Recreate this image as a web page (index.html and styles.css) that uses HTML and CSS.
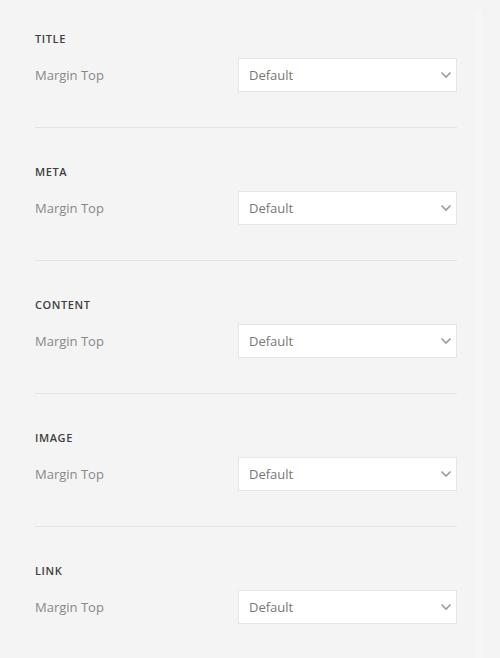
FILE: index.html
```html
<!DOCTYPE html>
<html>
<head>
<meta charset="utf-8">
<link rel="stylesheet" href="styles.css">
</head>
<body>
<div class="panel">
  <div class="section">
    <div class="title">TITLE</div>
    <div class="row">
      <span class="label">Margin Top</span>
      <div class="select"><span>Default</span><svg class="chev" width="12" height="8" viewBox="0 0 12 8"><path d="M1.5 1.5 L6 6 L10.5 1.5" fill="none" stroke="#9a9a9a" stroke-width="1.6"/></svg></div>
    </div>
  </div>
  <div class="section">
    <div class="title">META</div>
    <div class="row">
      <span class="label">Margin Top</span>
      <div class="select"><span>Default</span><svg class="chev" width="12" height="8" viewBox="0 0 12 8"><path d="M1.5 1.5 L6 6 L10.5 1.5" fill="none" stroke="#9a9a9a" stroke-width="1.6"/></svg></div>
    </div>
  </div>
  <div class="section">
    <div class="title">CONTENT</div>
    <div class="row">
      <span class="label">Margin Top</span>
      <div class="select"><span>Default</span><svg class="chev" width="12" height="8" viewBox="0 0 12 8"><path d="M1.5 1.5 L6 6 L10.5 1.5" fill="none" stroke="#9a9a9a" stroke-width="1.6"/></svg></div>
    </div>
  </div>
  <div class="section">
    <div class="title">IMAGE</div>
    <div class="row">
      <span class="label">Margin Top</span>
      <div class="select"><span>Default</span><svg class="chev" width="12" height="8" viewBox="0 0 12 8"><path d="M1.5 1.5 L6 6 L10.5 1.5" fill="none" stroke="#9a9a9a" stroke-width="1.6"/></svg></div>
    </div>
  </div>
  <div class="section last">
    <div class="title">LINK</div>
    <div class="row">
      <span class="label">Margin Top</span>
      <div class="select"><span>Default</span><svg class="chev" width="12" height="8" viewBox="0 0 12 8"><path d="M1.5 1.5 L6 6 L10.5 1.5" fill="none" stroke="#9a9a9a" stroke-width="1.6"/></svg></div>
    </div>
  </div>
</div>
<div class="scrolltrack"></div>
</body>
</html>
```
FILE: styles.css
```css
html, body {
  margin: 0;
  padding: 0;
  background: #f4f4f4;
  font-family: "Open Sans", "Noto Sans", sans-serif;
}
.panel {
  padding: 0 43px 0 35px;
}
.section {
  padding: 36px 0 35px;
  border-bottom: 1px solid #e4e4e4;
}
.section:first-child {
  padding-top: 31px;
}
.section.last {
  border-bottom: none;
}
.title {
  font-size: 11px;
  line-height: 16px;
  font-weight: 600;
  color: #3f3f3f;
  letter-spacing: 0.6px;
  margin-bottom: 11px;
}
.row {
  display: flex;
  align-items: center;
  justify-content: space-between;
  height: 34px;
}
.label {
  font-size: 13px;
  color: #888;
}
.select {
  box-sizing: border-box;
  width: 219px;
  height: 34px;
  background: #fff;
  border: 1px solid #e6e6e6;
  display: flex;
  align-items: center;
  justify-content: space-between;
  padding: 0 4px 0 10px;
  font-size: 13px;
  color: #777;
}
.chev {
  display: block;
}
.scrolltrack {
  position: fixed;
  top: 10px;
  bottom: 0;
  left: 475px;
  width: 7px;
  background: #f6f6f6;
}
```
